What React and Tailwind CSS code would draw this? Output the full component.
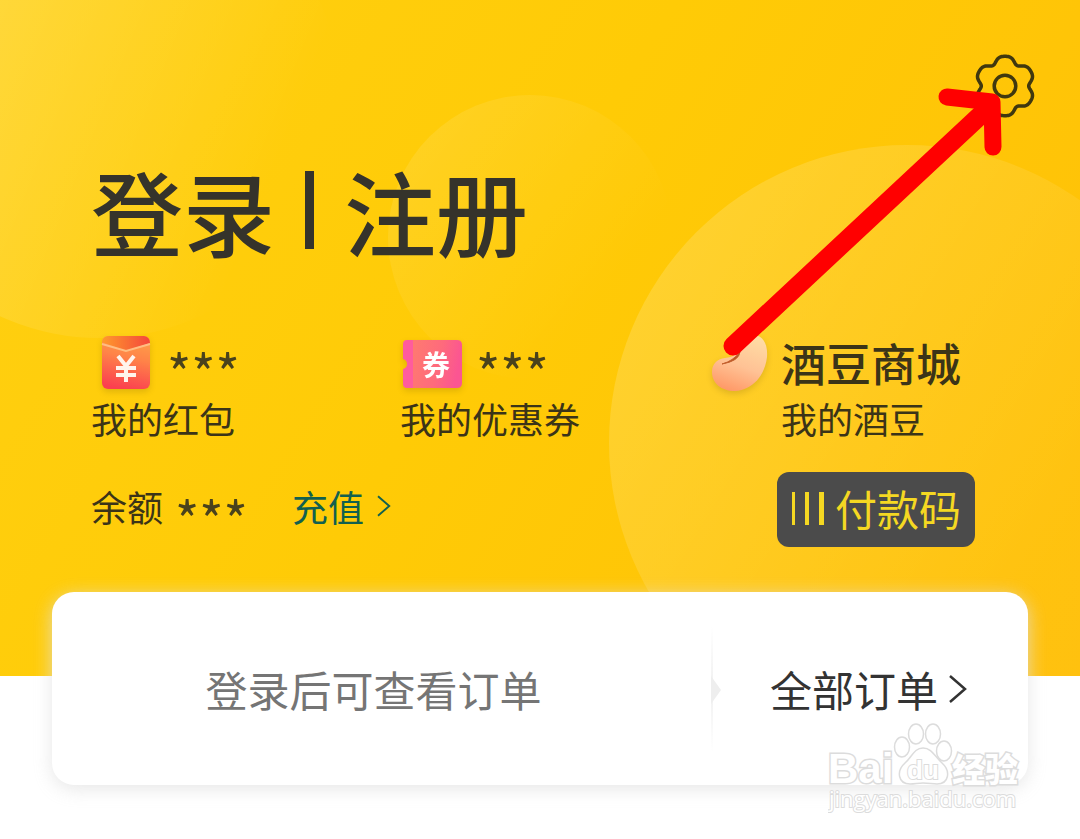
import React from 'react';

const stats = [
  { id: 'packet', label: '我的红包', value: '***', Icon: PacketIcon },
  { id: 'coupon', label: '我的优惠券', value: '***', Icon: CouponIcon },
];

// Soft circles behind the header content
function HeaderBackdrop() {
  return (
    <svg
      className="absolute inset-0 w-full h-full"
      viewBox="0 0 1080 676"
      preserveAspectRatio="xMidYMid slice"
      aria-hidden="true"
    >
      <defs>
        <linearGradient id="bg" x1="0" y1="0" x2="1080" y2="676" gradientUnits="userSpaceOnUse">
          <stop offset="0" stopColor="#ffd012" />
          <stop offset="0.45" stopColor="#ffcb06" />
          <stop offset="1" stopColor="#ffbf08" />
        </linearGradient>
        <linearGradient id="c1" x1="0" y1="0.2" x2="1" y2="0.6">
          <stop offset="0" stopColor="#fff" stopOpacity="0.24" />
          <stop offset="0.9" stopColor="#fff" stopOpacity="0" />
        </linearGradient>
        <linearGradient id="c2" x1="0" y1="0" x2="1" y2="0.8">
          <stop offset="0" stopColor="#fff" stopOpacity="0.12" />
          <stop offset="0.8" stopColor="#fff" stopOpacity="0" />
        </linearGradient>
        <linearGradient id="c3" x1="0" y1="0.1" x2="1" y2="0.7">
          <stop offset="0" stopColor="#fff" stopOpacity="0.18" />
          <stop offset="0.8" stopColor="#fff" stopOpacity="0.03" />
        </linearGradient>
      </defs>
      <rect width="1080" height="676" fill="url(#bg)" />
      <circle cx="100" cy="98" r="240" fill="url(#c1)" />
      <circle cx="530" cy="237" r="142" fill="url(#c2)" />
      <circle cx="907" cy="443" r="298" fill="url(#c3)" />
    </svg>
  );
}

// Six-lobed gear outline
function GearIcon() {
  const points = [];
  for (let i = 0; i < 180; i++) {
    const a = (i / 180) * Math.PI * 2;
    const lobe = 6 * (a - Math.PI / 2);
    const r = 27.4 + 3 * Math.cos(lobe) - 0.7 * Math.cos(2 * lobe);
    points.push(`${(32 + r * Math.cos(a)).toFixed(2)},${(32 + r * Math.sin(a)).toFixed(2)}`);
  }
  return (
    <svg className="w-16 h-16" viewBox="0 0 64 64" fill="none" stroke="#40380f" strokeWidth="3.5">
      <polygon points={points.join(' ')} strokeLinejoin="round" />
      <circle cx="32" cy="32" r="10.8" />
    </svg>
  );
}

function PacketIcon() {
  return (
    <svg className="w-16 h-16 drop-shadow-md" viewBox="0 0 64 64" aria-hidden="true">
      <defs>
        <linearGradient id="packet" x1="0.6" y1="0" x2="0.4" y2="1">
          <stop offset="0" stopColor="#ffa048" />
          <stop offset="0.4" stopColor="#ff8348" />
          <stop offset="1" stopColor="#fb3f50" />
        </linearGradient>
        <linearGradient id="flap" x1="0" y1="0" x2="1" y2="0">
          <stop offset="0" stopColor="#ff9a2c" />
          <stop offset="1" stopColor="#f4473c" />
        </linearGradient>
      </defs>
      <rect x="11" y="5" width="48" height="53" rx="6" fill="url(#packet)" />
      <path d="M11 11Q12 5 18 5H53Q59 6 59 12L35 20Z" fill="url(#flap)" />
      <path d="M11 13L35 20L59 13" fill="none" stroke="#ffbd82" strokeWidth="2" />
      <path
        d="M27 25L35 35L43 25M25 37H45M25 44H45M35 34V51"
        fill="none"
        stroke="#fff4ec"
        strokeWidth="4"
      />
    </svg>
  );
}

function CouponIcon() {
  return (
    <svg className="w-16 h-16 drop-shadow-md" viewBox="0 0 64 64" aria-hidden="true">
      <defs>
        <linearGradient id="coupon" x1="0" y1="0" x2="1" y2="0.2">
          <stop offset="0" stopColor="#ff7a70" />
          <stop offset="0.6" stopColor="#fe6a7c" />
          <stop offset="1" stopColor="#fb5592" />
        </linearGradient>
      </defs>
      <path d="M7 9H13V57H7Q3 57 3 53V38Q7 37 7 33Q7 29 3 28V13Q3 9 7 9Z" fill="#ff5c9d" />
      <path d="M13 9H57Q62 9 62 14V52Q62 57 57 57H13Z" fill="url(#coupon)" />
      <text x="36" y="45" textAnchor="middle" fill="#fff" className="text-[28px] font-bold">
        券
      </text>
    </svg>
  );
}

function BeanIcon() {
  return (
    <svg className="w-16 h-16 drop-shadow-md" viewBox="0 0 64 64" aria-hidden="true">
      <defs>
        <linearGradient id="bean" x1="0.7" y1="0" x2="0.35" y2="1">
          <stop offset="0" stopColor="#ffdca4" />
          <stop offset="0.55" stopColor="#ffc295" />
          <stop offset="1" stopColor="#ff9a68" />
        </linearGradient>
      </defs>
      <path
        d="M44 4C54 4 59 13 58 26C56 44 44 59 26 60C12 60 3 52 3 41C3 32 9 28 16 27C25 26 27 24 30 16C33 8 37 4 44 4Z"
        fill="url(#bean)"
      />
      <path d="M13 33Q24 30 31 21Q30 30 13 33Z" fill="#b85424" stroke="#c4602e" />
    </svg>
  );
}

function Chevron({ className }) {
  return (
    <svg className={className} viewBox="0 0 20 32" fill="none" stroke="currentColor" strokeWidth="2.5">
      <path d="M2 3L17 16L2 29" />
    </svg>
  );
}

// Red pointer drawn over the header, aimed at the settings button
function PointerArrow() {
  return (
    <svg
      className="absolute top-[80px] right-[70px] w-[290px] h-[284px] pointer-events-none"
      viewBox="720 80 290 284"
      fill="none"
      stroke="#ff0000"
      strokeLinecap="round"
      strokeLinejoin="round"
      aria-hidden="true"
    >
      <path d="M733 346L986 110" strokeWidth="19" />
      <path d="M947 97L992 102L993 147" strokeWidth="17" />
    </svg>
  );
}

function Watermark() {
  return (
    <svg
      className="absolute right-[50px] bottom-5 w-[202px] h-[96px] pointer-events-none"
      viewBox="0 0 202 96"
      fill="#fff"
      stroke="#dcdcdc"
      strokeWidth="1.5"
      aria-hidden="true"
    >
      <text x="0" y="60" strokeWidth="3" paintOrder="stroke" className="text-[42px] font-bold font-['Liberation_Sans']">Bai</text>
      <ellipse cx="74" cy="24" rx="7.5" ry="10" />
      <ellipse cx="88" cy="11" rx="7.5" ry="10" />
      <ellipse cx="105" cy="11" rx="7.5" ry="10" />
      <ellipse cx="116" cy="28" rx="7.5" ry="10" />
      <path d="M95 25C104 25 107 34 114 40C123 48 121 61 109 61C104 61 101 60 95 60C90 60 87 61 82 61C70 61 68 48 77 40C84 34 86 25 95 25Z" />
      <text x="79" y="56" strokeWidth="2" paintOrder="stroke" className="text-[26px] font-bold font-['Liberation_Sans']">du</text>
      <text x="124" y="59" strokeWidth="3" paintOrder="stroke" className="text-[33px] font-black">经验</text>
      <text x="1" y="84" strokeWidth="2" paintOrder="stroke" className="text-[22px] font-['Open_Sans']">jingyan.baidu.com</text>
    </svg>
  );
}

function App() {
  return (
    <main className="relative min-h-screen bg-white text-[#3b3418] font-['Noto_Sans_CJK_SC',sans-serif]">
      <header className="relative px-[91px] pt-[54px] pb-[129px]">
        <HeaderBackdrop />
        <div className="relative">
          <div className="flex justify-end -mr-[48px]">
            <button type="button" aria-label="设置">
              <GearIcon />
            </button>
          </div>

          <h1 className="mt-[34px] flex items-center gap-[30px] text-[92px] leading-[116px] font-medium text-[#35332b]">
            <a href="#login">登录</a>
            <span className="w-[9px] h-[78px] bg-[#35332b]" />
            <a href="#register">注册</a>
          </h1>

          <div className="mt-[63px] flex">
            {stats.map(({ id, label, value, Icon }) => (
              <div key={id} className="w-[309px]">
                <div className="flex items-center gap-3 h-16">
                  <Icon />
                  <span className="pt-4 text-[52px] leading-[48px] text-[#4a421c]">{value}</span>
                </div>
                <p className="text-[36px] leading-[46px]">{label}</p>
              </div>
            ))}
            <div className="flex gap-[8px]">
              <BeanIcon />
              <div>
                <p className="text-[45px] leading-[64px] font-medium">酒豆商城</p>
                <p className="text-[36px] leading-[46px]">我的酒豆</p>
              </div>
            </div>
          </div>

          <div className="mt-[31px] flex items-center justify-between pr-[14px]">
            <div className="pb-2 flex items-center text-[36px] leading-[50px]">
              <span>余额</span>
              <span className="ml-3 pt-6 text-[52px] leading-[40px] text-[#4a421c]">***</span>
              <a href="#recharge" className="ml-[44px] flex items-center gap-3 text-[#12604f]">
                充值
                <Chevron className="w-4 h-6" />
              </a>
            </div>
            <button
              type="button"
              className="h-[75px] px-[14px] flex items-center gap-[8px] rounded-xl bg-[#4b4b4b] text-[42px] leading-[70px] pb-1 text-[#f5d822]"
            >
              <svg className="w-9 h-9" viewBox="0 0 36 36" fill="currentColor">
                <path d="M1 2H4V35H1ZM14 2H18V35H14ZM28 2H33V35H28Z" />
              </svg>
              付款码
            </button>
          </div>
        </div>
        <PointerArrow />
      </header>

      <section className="relative -mt-[84px] mx-[52px] h-[193px] flex items-center rounded-[22px] bg-white text-[42px] shadow-[0_4px_18px_rgba(225,225,225,0.8)]">
        <p className="flex-1 text-center pr-[16px] text-[#757575]">登录后可查看订单</p>
        <div className="relative h-[126px] w-[2px] bg-gradient-to-b from-white via-[#f0f0f0] to-white">
          <svg className="absolute top-[50px] left-0 w-[10px] h-[28px]" viewBox="0 0 10 28" fill="#eeeeee">
            <path d="M0 0L10 14L0 28Z" />
          </svg>
        </div>
        <a href="#orders" className="w-[315px] pl-[57px] flex items-center gap-[10px] text-[#333333]">
          全部订单
          <Chevron className="w-5 h-8" />
        </a>
      </section>

      <Watermark />
    </main>
  );
}

export default App;
